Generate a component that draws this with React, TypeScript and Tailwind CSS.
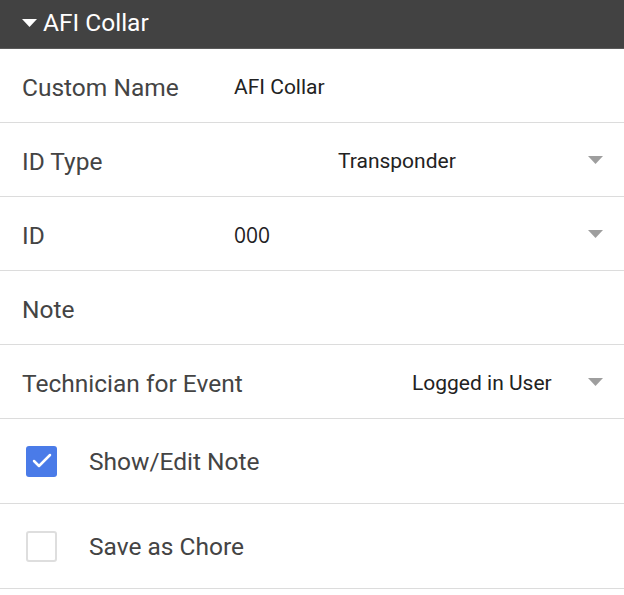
import { Check } from "lucide-react";

function Caret({ className }: { className: string }) {
  return (
    <svg width="15" height="8" viewBox="0 0 15 8" className={className}>
      <path d="M0 0 L15 0 L7.5 8 Z" fill="currentColor" />
    </svg>
  );
}

function Row({ children, tall }: { children: React.ReactNode; tall?: boolean }) {
  return (
    <div
      className={`flex items-center border-b border-[#dcdcdc] pl-[22px] pr-[21px] ${
        tall ? "h-[85px]" : "h-[74px]"
      }`}
    >
      {children}
    </div>
  );
}

const label = "pt-[6px] text-[24.5px] text-[#444]";
const value = "pt-[4px] text-[21px] text-[#222]";

function SelectRow({ text, val, offset }: { text: string; val: string; offset: string }) {
  return (
    <Row>
      <span className={`${label} ${offset}`}>{text}</span>
      <span className={`flex-1 ${value}`}>{val}</span>
      <Caret className="mt-[1px] text-[#9e9e9e]" />
    </Row>
  );
}

export default function App() {
  return (
    <div className="w-[624px] h-[595px] bg-white font-['Roboto',sans-serif]">
      <div className="flex h-[49px] items-center gap-[6px] border-b border-[#5a5a5a] bg-[#424242] pl-[22px] pb-[2px] text-white">
        <Caret className="text-white" />
        <span className="text-[24.5px]">AFI Collar</span>
      </div>

      <Row>
        <span className={`w-[212px] ${label}`}>Custom Name</span>
        <span className={value}>AFI Collar</span>
      </Row>

      <SelectRow text="ID Type" val="Transponder" offset="w-[316px]" />

      <Row>
        <span className={`w-[212px] ${label}`}>ID</span>
        <span className={`flex-1 ${value} font-['Open_Sans',sans-serif]`}>000</span>
        <Caret className="mt-[1px] text-[#9e9e9e]" />
      </Row>

      <Row>
        <span className={label}>Note</span>
      </Row>

      <SelectRow text="Technician for Event" val="Logged in User" offset="w-[390px]" />

      <Row tall>
        <div className="ml-[4px] flex h-[31px] w-[31px] items-center justify-center rounded-[3px] bg-[#4a7be8]">
          <Check className="h-[24px] w-[24px] text-white" strokeWidth={2.5} />
        </div>
        <span className="ml-[32px] pt-[2px] text-[24.5px] text-[#444]">Show/Edit Note</span>
      </Row>

      <Row tall>
        <div className="ml-[4px] h-[31px] w-[31px] rounded-[3px] border-2 border-[#dedede] bg-white" />
        <span className="ml-[32px] pt-[2px] text-[24.5px] text-[#444]">Save as Chore</span>
      </Row>
    </div>
  );
}
